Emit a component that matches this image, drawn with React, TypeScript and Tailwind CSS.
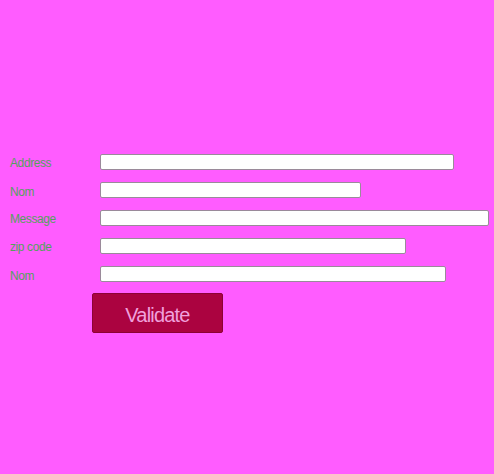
import { useState } from "react";

const fields = [
  { label: "Address", width: "w-[354px]", shift: "pt-[2px]" },
  { label: "Nom", width: "w-[261px]", shift: "pt-[3px]" },
  { label: "Message", width: "w-[389px]", shift: "pt-[1px]" },
  { label: "zip code", width: "w-[306px]", shift: "pt-[1px]" },
  { label: "Nom", width: "w-[346px]", shift: "pt-[4px]" },
];

export default function App() {
  const [values, setValues] = useState<string[]>(fields.map(() => ""));

  return (
    <div
      className="min-h-[474px] w-full bg-[#ff5cff] pt-[154px]"
      style={{ fontFamily: '"Liberation Sans", Arial, sans-serif' }}
    >
      <form className="flex flex-col gap-[12px]" onSubmit={(e) => e.preventDefault()}>
        {fields.map((f, i) => (
          <div key={i} className="flex items-center h-[16px]">
            <label
              className={`w-[100px] pl-[10px] ${f.shift} text-[12px] leading-none text-[#55a05e] tracking-[-0.4px]`}
            >
              {f.label}
            </label>
            <input
              type="text"
              value={values[i]}
              onChange={(e) => {
                const next = [...values];
                next[i] = e.target.value;
                setValues(next);
              }}
              className={`${f.width} h-[16px] bg-white border border-[#9a8a9a] rounded-[2px] outline-none`}
            />
          </div>
        ))}
        <button
          type="submit"
          className="ml-[92px] mt-[-1px] w-[131px] h-[40px] pt-[3px] bg-[#ab0340] border border-[#8c0235] rounded-[2px] text-[20px] text-[#f0a0dc] leading-none tracking-[-0.8px]"
        >
          Validate
        </button>
      </form>
    </div>
  );
}
